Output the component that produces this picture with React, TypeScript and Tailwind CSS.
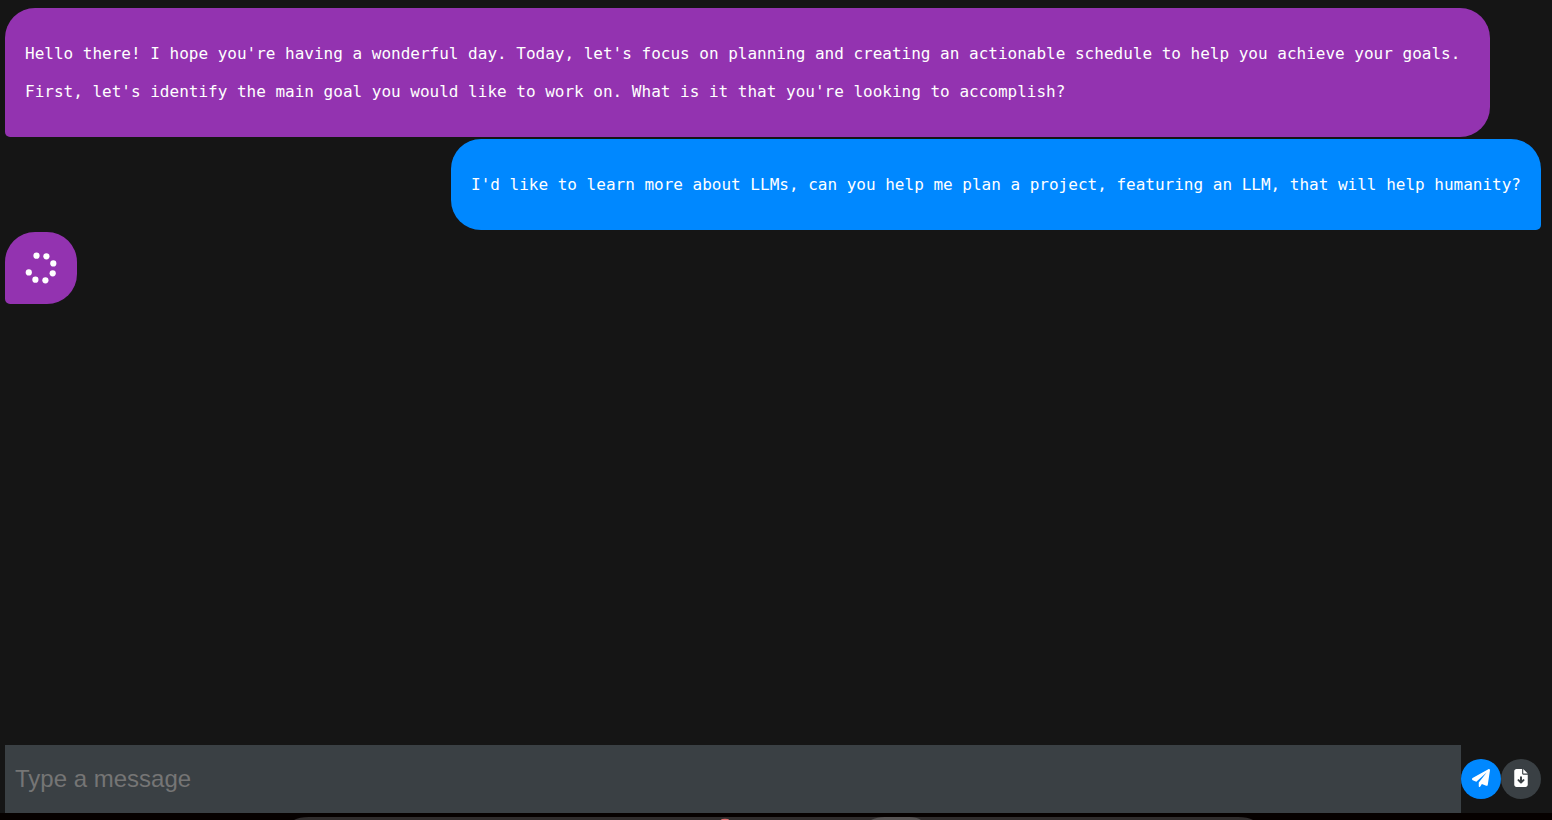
import { useState } from "react";
import type { ReactNode } from "react";

type Message = { id: number; from: "assistant" | "user"; text: string };

const messages: Message[] = [
  {
    id: 1,
    from: "assistant",
    text: "Hello there! I hope you're having a wonderful day. Today, let's focus on planning and creating an actionable schedule to help you achieve your goals.\n\nFirst, let's identify the main goal you would like to work on. What is it that you're looking to accomplish?",
  },
  {
    id: 2,
    from: "user",
    text: "I'd like to learn more about LLMs, can you help me plan a project, featuring an LLM, that will help humanity?",
  },
];

const dots = [
  [11.5, 3.7],
  [21.4, 4.3],
  [28.3, 11.4],
  [27.7, 21.3],
  [20.4, 28.3],
  [10.4, 27.7],
  [3.8, 20.4],
];

function Bubble({ from, children }: { from: Message["from"]; children: ReactNode }) {
  const look =
    from === "user"
      ? "self-end rounded-br-[5px] bg-[#0088ff] px-5 py-9"
      : "self-start rounded-bl-[5px] bg-[#9333b0] py-9 pl-5 pr-[30px]";
  return (
    <li className={`max-w-full rounded-[30px] ${look}`}>
      <p className="whitespace-pre-wrap font-['DejaVu_Sans_Mono',monospace] text-base leading-[19px] text-white">
        {children}
      </p>
    </li>
  );
}

function Loader() {
  return (
    <li className="self-start rounded-[30px] rounded-bl-[5px] bg-[#9333b0] p-5">
      <svg viewBox="0 0 32 32" className="size-8" fill="white" role="img" aria-label="Loading">
        {dots.map(([x, y]) => (
          <circle key={`${x}-${y}`} cx={x} cy={y} r="3.1" />
        ))}
      </svg>
    </li>
  );
}

function PlaneIcon() {
  return (
    <svg viewBox="0 0 512 512" className="size-[18px]" fill="currentColor" aria-hidden="true">
      <path d="M511.6 36.86l-64 415.1c-1.5 9.734-7.375 18.22-15.97 23.05c-4.844 2.719-10.27 4.097-15.68 4.097c-4.188 0-8.319-.8154-12.29-2.472l-122.6-51.1l-50.86 76.29C226.3 508.5 219.8 512 212.8 512C201.3 512 192 502.7 192 491.2v-96.18c0-7.115 2.372-14.03 6.742-19.64L416 96l-293.7 264.3L19.69 317.5C8.438 312.8 .8125 302.2 .0625 289.1s5.469-23.72 16.06-29.77l448-255.1c10.69-6.109 23.88-5.547 34 1.406S513.5 24.72 511.6 36.86z" />
    </svg>
  );
}

function FileDownIcon() {
  return (
    <svg viewBox="0 0 384 512" className="h-[18px] w-[14px]" fill="currentColor" aria-hidden="true">
      <path d="M384 128h-128V0L384 128zM256 160H384v288c0 35.3-28.7 64-64 64H64C28.7 512 0 483.3 0 448V64C0 28.7 28.7 0 64 0H224v128C224 145.7 238.3 160 256 160z" />
      <path
        d="M192 236V376M120 316L192 384L264 316"
        fill="none"
        stroke="#3a4044"
        strokeWidth="56"
        strokeLinecap="round"
        strokeLinejoin="round"
      />
    </svg>
  );
}

export default function App() {
  const [draft, setDraft] = useState("");
  return (
    <div className="flex h-screen flex-col bg-black">
      <main className="flex min-h-0 flex-1 flex-col bg-[#151515] pl-[5px] pr-[11px] pt-2">
        <ul className="flex min-h-0 flex-1 flex-col gap-0.5 overflow-hidden">
          {messages.map((m) => (
            <Bubble key={m.id} from={m.from}>
              {m.text}
            </Bubble>
          ))}
          <Loader />
        </ul>
        <form className="flex items-center" onSubmit={(e) => e.preventDefault()}>
          <input
            type="text"
            aria-label="Message"
            placeholder="Type a message"
            value={draft}
            onChange={(e) => setDraft(e.target.value)}
            className="h-[68px] min-w-0 flex-1 bg-[#3a4044] px-2.5 font-['Liberation_Sans',sans-serif] text-2xl text-white outline-none placeholder:text-[#757575]"
          />
          <button
            type="submit"
            aria-label="Send"
            className="flex size-10 items-center justify-center rounded-full bg-[#0088ff] pb-0.5 text-white"
          >
            <PlaneIcon />
          </button>
          <button
            type="button"
            aria-label="Download conversation"
            className="flex size-10 items-center justify-center rounded-full bg-[#3a4044] pb-0.5 text-white"
          >
            <FileDownIcon />
          </button>
        </form>
      </main>
      <div className="flex h-[7px] items-end justify-center overflow-hidden bg-[#060100]" aria-hidden="true">
        <svg viewBox="0 0 970 3" className="h-[3px] w-[970px]">
          <path d="M3 3Q8 0 18 0H947Q957 0 962 3Z" fill="#302d2d" />
          <path d="M580 3Q586 0 594 0H618Q626 0 630 3Z" fill="#575454" />
          <ellipse cx="434" cy="3" rx="4" ry="1.2" fill="#e07070" />
        </svg>
      </div>
    </div>
  );
}
